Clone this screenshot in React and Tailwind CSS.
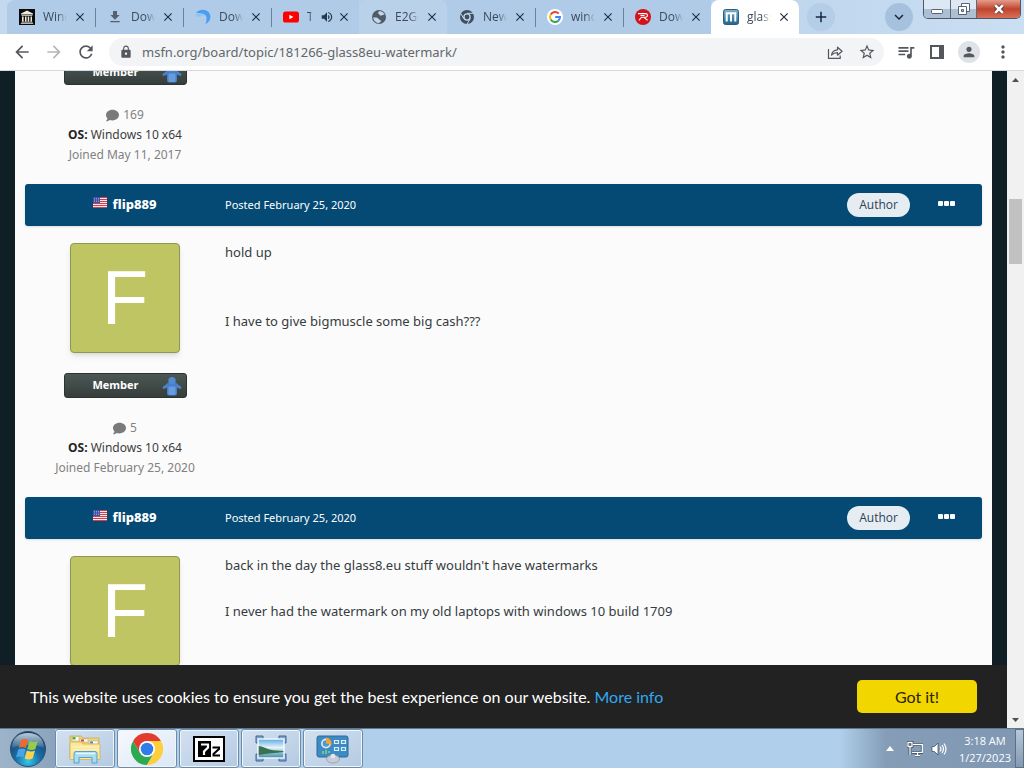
import React from "react";
import {
  MdArrowBack, MdArrowForward, MdRefresh, MdLock, MdStarBorder, MdQueueMusic,
  MdPerson, MdMoreVert, MdDownload, MdVolumeUp, MdClose, MdAdd, MdExpandMore,
} from "react-icons/md";
import { FaComment } from "react-icons/fa";

function ArchiveIcon() {
  return (
    <svg viewBox="0 0 16 16" className="size-4">
      <rect width="16" height="16" fill="#0b0b0b" />
      <path d="M2 4.6 8 1.6l6 3v.9H2zM2.6 6.2h10.8v.8H2.6zM3 7.4h1.6v5H3zM6 7.4h1.5v5H6zM8.7 7.4h1.5v5H8.7zM11.5 7.4H13v5h-1.5zM2.4 12.8h11.2v.7H2.4zM1.8 14h12.4v.8H1.8z" fill="#f1e9df" />
    </svg>
  );
}

function SwirlIcon() {
  return (
    <svg viewBox="0 0 16 16" className="size-4">
      <path d="M1 3.800C4.800-.4 12.200-.2 14.800 5c1.800 4.200-.2 8.600-5 10.500 1.400-1.600 1.800-3 1.500-4.500 1-3.200-.4-5-2.600-6C6.500 4 3.500 4.200 1 3.800Z" fill="#4a9df0" />
      <path d="M.2 5.200c3.600-1.400 7-.9 9.300 1.800-2.400-.8-4.700-.2-5.700 1.200C2 7.600.8 6.600.2 5.200Z" fill="#8cc4f6" />
    </svg>
  );
}

function YouTubeIcon() {
  return (
    <svg viewBox="0 0 16 16" className="size-4">
      <rect y="2.500" width="16" height="11" rx="2.600" fill="#f00" />
      <path d="M6.400 5.700v4.600l4-2.300z" fill="#fff" />
    </svg>
  );
}

function GlobeIcon() {
  return (
    <svg viewBox="0 0 16 16" className="size-4">
      <circle cx="8" cy="8" r="7" fill="#505b68" />
      <path d="M8.500 1.900c2.600.3 4.500 1.900 5.200 4.100-1.600-.6-2.800.8-4.200.6-1.200-.2-.6-1.400-1.800-1.700-1-.3-.6-2 .8-3ZM2.200 8.300c2 .2 4.700.2 5.500 1.700.7 1.300 2.700.8 2.300 2.200-.3 1-1.600 1.200-2.300 2-3-.2-5.200-2.600-5.500-5.900Z" fill="#c3d6ea" />
    </svg>
  );
}

function ChromeGreyIcon() {
  return (
    <svg viewBox="0 0 16 16" className="size-4">
      <circle cx="8" cy="8" r="7" fill="#3f4e60" />
      <circle cx="8" cy="8" r="3.700" fill="#c4d9ee" />
      <circle cx="8" cy="8" r="2.400" fill="#3f4e60" />
      <path d="M8 4.300h6.600M4.800 9.800 1.700 4.400M11.200 9.800 8 15.200" stroke="#c4d9ee" strokeWidth="1" />
    </svg>
  );
}

function GoogleIcon() {
  return (
    <svg viewBox="0 0 16 16" className="size-4">
      <circle cx="8" cy="8" r="8" fill="#fff" />
      <g fill="none" strokeWidth="2">
        <path d="M11.700 4.500A5 5 0 0 0 3.700 5.500" stroke="#ea4335" />
        <path d="M3.700 5.500a5 5 0 0 0 0 5" stroke="#fbbc05" />
        <path d="M3.700 10.500a5 5 0 0 0 7.700 1.200" stroke="#34a853" />
        <path d="M11.400 11.700A5 5 0 0 0 13 8.100H8.200" stroke="#4285f4" />
      </g>
    </svg>
  );
}

function RedIcon() {
  return (
    <svg viewBox="0 0 16 16" className="size-4">
      <circle cx="8" cy="8" r="8" fill="#d3121b" />
      <path d="M3 4.600h7.400c2.800 0 2.800 3.400.2 3.600H6.400L4 11.400M8.800 8.400l3.800 2.800M5.500 6.500h4" fill="none" stroke="#fff" strokeWidth="1.100" />
    </svg>
  );
}

function MsfnIcon() {
  return (
    <svg viewBox="0 0 16 16" className="size-4">
      <defs>
        <linearGradient id="msfn" x1="0" y1="0" x2="0" y2="1">
          <stop offset="0" stopColor="#7fb2cf" />
          <stop offset="1" stopColor="#1c6590" />
        </linearGradient>
      </defs>
      <rect x=".5" y=".5" width="15" height="15" rx="2" fill="url(#msfn)" stroke="#2d5f7d" />
      <path d="M3.700 12.500V4.300h8.600v8.200M8 4.300v8.200" fill="none" stroke="#fff" strokeWidth="2" />
    </svg>
  );
}

const tabs = [
  { title: "Windows", icon: <ArchiveIcon /> },
  { title: "Download", icon: <MdDownload className="size-4 text-[#55606c]" />, line: true },
  { title: "Download", icon: <SwirlIcon />, line: true },
  { title: "T", icon: <YouTubeIcon />, line: true, audio: true },
  { title: "E2Guard", icon: <GlobeIcon />, light: true },
  { title: "New Tab", icon: <ChromeGreyIcon /> },
  { title: "windows", icon: <GoogleIcon />, line: true },
  { title: "Download", icon: <RedIcon />, line: true },
  { title: "glass8", icon: <MsfnIcon />, active: true },
];

function Tab({ tab }) {
  const tone = tab.active
    ? "h-[34px] rounded-t-lg bg-white"
    : tab.light
      ? "h-[34px] rounded-t-lg bg-[#bad1ea]"
      : "h-[34px] bg-[#b0cbe7]";
  return (
    <div className={`relative flex w-[88px] shrink-0 items-center pr-2 pl-3 ${tone}`}>
      {tab.line && <span className="absolute top-2 left-0 h-[19px] w-px bg-[#6b8099]" />}
      <a href="#" className="flex min-w-0 grow items-center gap-2 text-[#3c4a5c]">
        <span className="shrink-0">{tab.icon}</span>
        <span
          className={`overflow-hidden text-xs whitespace-nowrap [mask-image:linear-gradient(to_right,#000_60%,transparent)] ${tab.audio ? "w-[5px]" : "w-[24px]"}`}
        >
          {tab.title}
        </span>
        {tab.audio && <MdVolumeUp className="size-3.5 shrink-0 text-[#26384c]" />}
      </a>
      <button aria-label="Close tab" className="shrink-0 text-[#1f3044]">
        <MdClose className="size-3.5 stroke-current" />
      </button>
    </div>
  );
}

function WindowButtons() {
  return (
    <div className="flex h-[19px] shrink-0 self-start overflow-hidden rounded-b-[5px] border border-t-0 border-[#4b5867]">
      <button aria-label="Minimize" className="flex w-[27px] items-center justify-center border-r border-[#5d6b7b] bg-linear-to-b from-[#dce8f3] from-50% to-[#adc0d3] to-50%">
        <svg viewBox="0 0 14 14" className="size-3.5">
          <rect x="1.500" y="7.500" width="11" height="4" rx=".8" fill="#fff" stroke="#566373" />
        </svg>
      </button>
      <button aria-label="Restore" className="flex w-[26px] items-center justify-center border-r border-[#5d6b7b] bg-linear-to-b from-[#dce8f3] from-50% to-[#adc0d3] to-50%">
        <svg viewBox="0 0 14 14" className="size-3.5">
          <path d="M4.500 1.500h8v8h-8z" fill="#fff" stroke="#566373" />
          <path d="M1.500 4.500h8v8h-8z" fill="#fff" stroke="#566373" />
          <path d="M4.500 7.500h2v2h-2z" fill="#b7c6d6" stroke="#566373" />
        </svg>
      </button>
      <button aria-label="Close" className="flex w-[43px] items-center justify-center bg-linear-to-b from-[#e39c8a] from-0% via-[#c0432c] via-50% to-[#d8705a]">
        <svg viewBox="0 0 14 14" className="size-3.5">
          <path d="m3.200 3.200 7.600 7.600m0-7.600-7.600 7.600" stroke="#5d3a3a" strokeWidth="4.200" />
          <path d="m3.200 3.200 7.600 7.600m0-7.600-7.600 7.600" stroke="#fff" strokeWidth="2.600" />
        </svg>
      </button>
    </div>
  );
}

function TabStrip() {
  return (
    <header className="flex h-[34px] shrink-0 justify-between bg-linear-to-r from-[#c4d9ee] via-[#b0cbe7] to-[#cbdff2] pr-[3px] pl-[7px]">
      <div className="flex min-w-0">
        <nav className="flex min-w-0 overflow-hidden rounded-tl-lg">
          {tabs.map((tab, i) => <Tab key={i} tab={tab} />)}
        </nav>
        <button aria-label="New tab" className="mt-[3px] ml-2 flex size-7 shrink-0 items-center justify-center rounded-full bg-[#b4cee8] text-[#16283c]">
          <MdAdd className="size-[18px] stroke-current" />
        </button>
      </div>
      <div className="flex shrink-0 gap-[10px]">
        <button aria-label="Search tabs" className="mt-[3px] flex size-7 items-center justify-center rounded-full bg-[#a5c1de] text-[#16283c]">
          <MdExpandMore className="size-[18px] stroke-current" />
        </button>
        <WindowButtons />
      </div>
    </header>
  );
}

function Toolbar() {
  return (
    <div className="flex h-[37px] shrink-0 items-center border-b border-[#d5d8dc] bg-white pr-[11px] pl-3 text-[#54585d]">
      <div className="flex items-center gap-3">
        <button aria-label="Back"><MdArrowBack className="size-5" /></button>
        <button aria-label="Forward"><MdArrowForward className="size-5 text-[#b4b7bb]" /></button>
        <button aria-label="Reload"><MdRefresh className="size-5" /></button>
      </div>
      <div className="ml-[13px] flex h-7 min-w-0 grow items-center gap-[9px] rounded-full bg-[#f2f4f6] pr-2 pl-[10px]">
        <MdLock className="size-3.5 shrink-0" />
        <input
          aria-label="Address"
          className="min-w-0 grow bg-transparent font-['Noto_Sans',sans-serif] text-[13px] leading-7 text-[#63676c] outline-none"
          defaultValue="msfn.org/board/topic/181266-glass8eu-watermark/"
        />
        <div className="flex items-center gap-[15px]">
          <button aria-label="Share">
            <svg viewBox="0 0 16 16" className="size-4" fill="none" stroke="currentColor" strokeWidth="1.200">
              <path d="M1.500 5v9.400h11.700v-3" />
              <path d="M4.500 11.200c.4-3.300 2.400-5.200 6-5.400V3.200l4.600 4-4.600 4V8.700c-2.700 0-4.600.8-6 2.500Z" strokeLinejoin="round" />
            </svg>
          </button>
          <button aria-label="Bookmark"><MdStarBorder className="size-[18px]" /></button>
        </div>
      </div>
      <div className="ml-3 flex shrink-0 items-center gap-[13px]">
        <button aria-label="Media"><MdQueueMusic className="size-5" /></button>
        <button aria-label="Side panel">
          <svg viewBox="0 0 16 16" className="size-4">
            <path d="M2 2h12v12H2z" fill="none" stroke="currentColor" strokeWidth="2" />
            <path d="M10 2h5v12h-5z" fill="currentColor" />
          </svg>
        </button>
        <button aria-label="Profile" className="flex size-[22px] items-center justify-center rounded-full bg-[#dfe2e6]">
          <MdPerson className="size-4" />
        </button>
        <button aria-label="Menu"><MdMoreVert className="size-5" /></button>
      </div>
    </div>
  );
}

function Flag() {
  return (
    <svg viewBox="0 0 14 11" className="h-[11px] w-3.5">
      <rect width="14" height="11" fill="#f6e9ec" />
      <path d="M0 .5h14M0 2.500h14M0 4.500h14M0 6.500h14M0 8.500h14M0 10.500h14" stroke="#d0404c" />
      <rect width="7" height="6" fill="#3d4fa6" />
      <path d="M1 1.500h5M1 3h5M1 4.500h5" stroke="#c8cff0" strokeWidth=".6" strokeDasharray="1 1" />
    </svg>
  );
}

function Badge() {
  return (
    <div className="flex h-[25px] w-[123px] items-center justify-end rounded-[3px] border border-[#2c3331] bg-linear-to-b from-[#4c5855] to-[#363e3c] pr-1">
      <span className="grow pl-[17px] text-center text-[11px] font-bold text-white">Member</span>
      <svg viewBox="0 0 20 20" className="ml-3 size-5">
        <path d="M6 7 .3 11.300l1.200 1.800 5-2zM14 7l5.700 4.300-1.200 1.800-5-2z" fill="#4f83c8" />
        <rect x="5" y="6.500" width="10" height="13" rx="2" fill="#477dc9" />
        <rect x="6.500" y="10.500" width="7" height="8.500" rx="1" fill="#669be0" />
        <circle cx="10" cy="4.700" r="3.700" fill="#5389d0" />
      </svg>
    </div>
  );
}

function AuthorStats({ count, joined }) {
  return (
    <div className="mt-5 mb-[19px] text-center font-['Noto_Sans',sans-serif] text-xs leading-5 text-[#818181]">
      <p className="flex items-center justify-center gap-1">
        <FaComment className="size-[13px] text-[#7a7a7a]" />
        {count}
      </p>
      <p className="text-[#3d3d3d]"><b className="text-[#252525]">OS:</b> Windows 10 x64</p>
      <p>Joined {joined}</p>
    </div>
  );
}

function Post({ children }) {
  return (
    <article>
      <header className="flex h-[42px] items-center rounded-[3px] bg-[#044a75] pr-[27px] font-['Noto_Sans',sans-serif] text-white shadow-sm">
        <div className="flex w-[200px] shrink-0 items-center justify-center gap-[5px]">
          <span className="pb-[6px]"><Flag /></span>
          <a href="#" className="text-[13px] font-extrabold">flip889</a>
        </div>
        <a href="#" className="grow text-[11px]">Posted February 25, 2020</a>
        <span className="mr-7 rounded-full bg-[#e6edf2] px-3 font-['Open_Sans',sans-serif] text-xs leading-6 text-[#2c4357]">Author</span>
        <button aria-label="More options" className="pb-[3px]">
          <svg viewBox="0 0 17 5" className="h-[5px] w-[17px]" fill="#fff">
            <rect width="5" height="5" rx="1" />
            <rect x="6" width="5" height="5" rx="1" />
            <rect x="12" width="5" height="5" rx="1" />
          </svg>
        </button>
      </header>
      <div className="flex">
        <aside className="flex w-[200px] shrink-0 flex-col items-center pt-[17px]">
          <div className="mb-5 flex size-[110px] items-center justify-center rounded-[4px] border border-[#8f9850] bg-[#bec562] font-['Liberation_Sans',sans-serif] text-[76px] leading-none text-white shadow-md">
            F
          </div>
          <Badge />
          <AuthorStats count="5" joined="February 25, 2020" />
        </aside>
        <div className="grow pt-[15px] font-['Noto_Sans',sans-serif] text-[13px] leading-[23px] text-[#353c41]">{children}</div>
      </div>
    </article>
  );
}

function ScrollBar() {
  return (
    <div className="flex w-[17px] shrink-0 flex-col items-center bg-[#f1f1f1]">
      <span className="flex h-[17px] items-center">
        <svg viewBox="0 0 7 4" className="h-1 w-[7px]"><path d="M0 4 3.500 0 7 4z" fill="#505050" /></svg>
      </span>
      <span className="grow-[111]" />
      <span className="w-[13px] grow-[65] bg-[#c1c1c1]" />
      <span className="grow-[447]" />
      <span className="flex h-[17px] items-center">
        <svg viewBox="0 0 7 4" className="h-1 w-[7px]"><path d="M0 0 3.500 4 7 0z" fill="#505050" /></svg>
      </span>
    </div>
  );
}

function CookieBar() {
  return (
    <div className="flex shrink-0 items-center justify-between bg-[#222222] px-[30px] py-[15px] font-[Lato,sans-serif] text-base text-white">
      <p>
        This website uses cookies to ensure you get the best experience on our website.{" "}
        <a href="#" className="text-[#31a8f0]">More info</a>
      </p>
      <button className="h-[33px] w-[120px] rounded-[5px] bg-[#f1d600] text-[#2a2400]">Got it!</button>
    </div>
  );
}

function StartOrb() {
  return (
    <svg viewBox="0 0 38 38" className="size-[38px]">
      <defs>
        <radialGradient id="orb" cx=".5" cy=".85" r=".8">
          <stop offset="0" stopColor="#35c6ee" />
          <stop offset=".45" stopColor="#1a6da6" />
          <stop offset="1" stopColor="#173e68" />
        </radialGradient>
        <linearGradient id="gloss" x1="0" y1="0" x2="0" y2="1">
          <stop offset="0" stopColor="#e3eef6" stopOpacity=".8" />
          <stop offset="1" stopColor="#fff" stopOpacity=".1" />
        </linearGradient>
      </defs>
      <circle cx="19" cy="19" r="17.500" fill="url(#orb)" stroke="#31516e" />
      <path d="M3 18C3 8 10 3 19 3s16 5 16 15c-8-4-24-4-32 0Z" fill="url(#gloss)" />
      <path d="M12 10c2.900-1.500 5.300-1.300 7.200.1l-2.300 8c-2.400-1.400-4.700-1.300-7.200-.1z" fill="#ee6a2c" />
      <path d="M20.600 10.900c2.800 1.400 5.200 1.500 8.100.1l-2.300 8c-2.700 1.300-5.300 1.100-8.100-.1z" fill="#97cb4a" />
      <path d="M9.300 19.500c2.800-1.400 5-1.200 7.200.1l-2.300 8c-2.400-1.500-4.700-1.300-7.200-.1z" fill="#4aa5e6" />
      <path d="M17.900 20.400c2.800 1.400 5.300 1.500 8.100.1l-2.300 8c-2.600 1.200-5.400 1.200-8.100-.1z" fill="#fcd44a" />
    </svg>
  );
}

function ExplorerIcon() {
  return (
    <svg viewBox="0 0 34 32" className="h-8 w-[34px]">
      <path d="M2 3h11l2 2h16v20H2z" fill="#f0d679" stroke="#c3a450" strokeWidth=".7" />
      <path d="M4 3.500h7V8H4zM12 6h8v3h-8zM21 8h9v3h-9z" fill="#f8fbfd" stroke="#bca55c" strokeWidth=".5" />
      <path d="M4.500 4h3v2.500h-3z" fill="#48b03e" />
      <path d="M13 6.500h3v2h-3z" fill="#d3463a" />
      <path d="M22 8.500h3v2h-3z" fill="#4288cc" />
      <path d="M2 9h11l2 2h17v15.500H2z" fill="#fae79a" stroke="#d3b355" strokeWidth=".8" />
      <path d="M3 14h28M3 17h28" stroke="#fff4be" />
      <path d="M6 30V20.500q0-2 2-2h19q2 0 2 2V30h-5v-5.500H11V30z" fill="#a7dcf3" stroke="#57a1ca" />
      <path d="M8 20.500h19" stroke="#e5f7ff" strokeWidth="1.500" />
    </svg>
  );
}

function ChromeIcon() {
  return (
    <svg viewBox="0 0 32 32" className="size-8">
      <path d="M2.140 8A16 16 0 0 0 16 32l6.900-12L16 16 9.100 20Z" fill="#2da94f" />
      <path d="M29.860 8A16 16 0 0 1 16 32l6.900-12L16 16V8Z" fill="#fdcf3c" />
      <path d="M2.140 8A16 16 0 0 1 29.860 8H16L9.100 20Z" fill="#e33b2e" />
      <circle cx="16" cy="16" r="8" fill="#fff" />
      <circle cx="16" cy="16" r="6.300" fill="#2f7de9" />
    </svg>
  );
}

function SevenZipIcon() {
  return (
    <svg viewBox="0 0 32 26" className="h-[26px] w-8">
      <rect x="1" y="1" width="30" height="24" fill="#fff" stroke="#000" strokeWidth="2" />
      <rect x="5" y="5" width="13" height="16" fill="#000" />
      <path d="M8 8.500h7v3l-4 4V19" fill="none" stroke="#fff" strokeWidth="2.200" />
      <path d="M19.500 11.500h6.500v1.500l-5.500 5v1.500H27" fill="none" stroke="#000" strokeWidth="2" />
    </svg>
  );
}

function PictureIcon() {
  return (
    <svg viewBox="0 0 32 28" className="h-7 w-8">
      <defs>
        <linearGradient id="sky" x1="0" y1="0" x2="0" y2="1">
          <stop offset="0" stopColor="#5aaae0" /><stop offset=".45" stopColor="#e6f4fa" />
          <stop offset=".65" stopColor="#a5cdd3" /><stop offset="1" stopColor="#3f8fb0" />
        </linearGradient>
      </defs>
      <path d="M1 1h7v5H6v2H1zM24 1h7v7h-5V6h-2zM31 26h-7v-5h2v-2h5zM8 26H1v-7h5v2h2z" fill="#7fa5cf" stroke="#41659a" />
      <rect x="3" y="4" width="26" height="19" fill="url(#sky)" stroke="#f5fbff" strokeWidth="1.400" />
      <path d="M3.700 11c4 0 7 2.500 11 3.600 5 1.200 9 .9 13.600 1.400v1c-8 1-16 1.500-24.600 3z" fill="#3c7050" />
    </svg>
  );
}

function ControlPanelIcon() {
  return (
    <svg viewBox="0 0 34 30" className="h-[30px] w-[34px]">
      <rect x="1" y="2" width="31" height="21" rx="2" fill="#3d8bc2" stroke="#2b6b9d" />
      <circle cx="10" cy="9.500" r="5" fill="#d9ebf7" />
      <circle cx="10" cy="9.500" r="3.300" fill="#4b9ace" />
      <path d="M10 9.500V3.500A6 6 0 0 1 15.500 11z" fill="#f2a33a" />
      <path d="M18.500 6.500h4v3h-4zM25.500 6.500h4v3h-4zM18.500 13.500h4v3h-4zM25.500 13.500h4v3h-4z" fill="#4b9ace" stroke="#d8eefa" strokeWidth="1.200" />
      <path d="M7 17v3M10 16v4M13 17v2" stroke="#83d67c" strokeWidth="1.500" />
      <ellipse cx="17" cy="25" rx="6.500" ry="4" fill="#c9ccd4" stroke="#8d949f" strokeWidth=".7" />
      <circle cx="17" cy="22" r="2.300" fill="#e6e7eb" />
    </svg>
  );
}

const apps = [
  { name: "File Explorer", icon: <ExplorerIcon /> },
  { name: "Google Chrome", icon: <ChromeIcon />, active: true },
  { name: "7-Zip", icon: <SevenZipIcon /> },
  { name: "Pictures", icon: <PictureIcon /> },
  { name: "Control Panel", icon: <ControlPanelIcon /> },
];

function Taskbar() {
  return (
    <footer className="flex h-10 shrink-0 items-stretch border-t border-[#5f7890] bg-[#b0cfea]">
      <button aria-label="Start" className="flex w-[55px] shrink-0 items-center justify-center bg-linear-to-r from-[#9db4ca] to-[#8ba4bd]">
        <StartOrb />
      </button>
      <div className="flex min-w-0 grow gap-0.5">
        {apps.map((app) => (
          <button
            key={app.name}
            aria-label={app.name}
            className={`flex w-[60px] items-center justify-center rounded-[3px] border border-[#6f8aa6] shadow-[inset_0_0_0_1px_#eef5fb] ${app.active ? "bg-linear-to-br from-[#f6f9fd] to-[#dbe7f5]" : "bg-linear-to-br from-[#d3e1f0] to-[#b4cae2]"}`}
          >
            {app.icon}
          </button>
        ))}
      </div>
      <div className="flex shrink-0 items-center bg-linear-to-r from-[#b0cfea] from-0% via-[#859db7] via-25% to-[#7f97b1] pl-[46px] text-white">
        <button aria-label="Show hidden icons">
          <svg viewBox="0 0 8 5" className="h-[5px] w-2"><path d="M0 5 4 0l4 5z" fill="#fff" /></svg>
        </button>
        <svg viewBox="0 0 16 16" className="ml-[13px] size-4" fill="none">
          <path d="M6 3.500h9.300v7.800H5M8 14.500h5M10.500 11.500v3M1 1.500h4v4H1zM3 5.500v8.500" stroke="#33465b" strokeWidth="2.800" />
          <path d="M6 3.500h9.300v7.800H5M8 14.500h5M10.500 11.500v3M1 1.500h4v4H1zM3 5.500v8.500" stroke="#fff" strokeWidth="1.300" />
        </svg>
        <svg viewBox="0 0 16 16" className="ml-2 size-4" fill="none" stroke="#fff" strokeWidth="1.200">
          <path d="M1 5.500h2.500L7 2v12l-3.500-3.500H1z" fill="#fff" stroke="#33465b" strokeWidth=".7" />
          <path d="M9 5.500q2 2.500 0 5M11 4q3 4 0 8M13 2.500q4 5.500 0 11" />
        </svg>
        <div className="ml-3 text-center text-[11px] leading-[17px]">
          <p>3:18 AM</p>
          <p>1/27/2023</p>
        </div>
        <button aria-label="Show desktop" className="ml-1 h-full w-[9px] border border-[#5b7089] bg-linear-to-b from-[#b8c8d8] to-[#8399b1]" />
      </div>
    </footer>
  );
}

export default function App() {
  return (
    <div className="flex h-screen flex-col overflow-hidden bg-[#b0cfea] font-['Open_Sans','Noto_Sans',sans-serif]">
      <TabStrip />
      <Toolbar />
      <div className="flex min-h-0 grow">
        <div className="flex min-w-0 grow flex-col bg-[#101e26]">
          <main className="mx-[15px] min-h-0 grow overflow-hidden bg-[#fbfbfb] px-[10px]">
            <div className="-mt-[11px] flex w-[200px] flex-col items-center">
              <Badge />
              <AuthorStats count="169" joined="May 11, 2017" />
            </div>
            <Post>
              <p>hold up</p>
              <p className="mt-[46px]">I have to give bigmuscle some big cash???</p>
            </Post>
            <Post>
              <p>back in the day the glass8.eu stuff wouldn't have watermarks</p>
              <p className="mt-[23px]">I never had the watermark on my old laptops with windows 10 build 1709</p>
            </Post>
          </main>
          <CookieBar />
        </div>
        <ScrollBar />
      </div>
      <Taskbar />
    </div>
  );
}
